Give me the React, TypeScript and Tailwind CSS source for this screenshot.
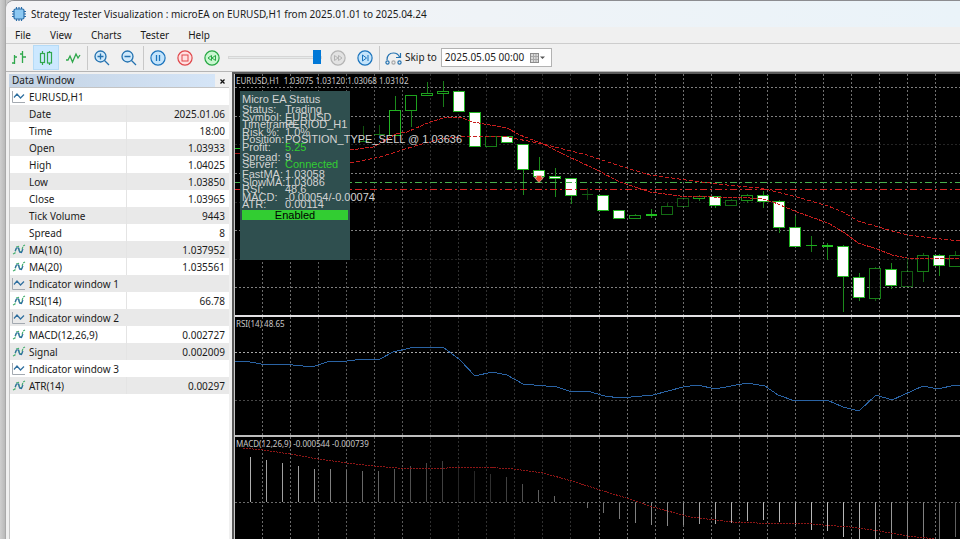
import type { ReactNode } from "react";

type Row = { label: string; value?: string; icon?: "window" | "series" };

const rows: Row[] = [
  { label: "EURUSD,H1", icon: "window" },
  { label: "Date", value: "2025.01.06" },
  { label: "Time", value: "18:00" },
  { label: "Open", value: "1.03933" },
  { label: "High", value: "1.04025" },
  { label: "Low", value: "1.03850" },
  { label: "Close", value: "1.03965" },
  { label: "Tick Volume", value: "9443" },
  { label: "Spread", value: "8" },
  { label: "MA(10)", value: "1.037952", icon: "series" },
  { label: "MA(20)", value: "1.035561", icon: "series" },
  { label: "Indicator window 1", icon: "window" },
  { label: "RSI(14)", value: "66.78", icon: "series" },
  { label: "Indicator window 2", icon: "window" },
  { label: "MACD(12,26,9)", value: "0.002727", icon: "series" },
  { label: "Signal", value: "0.002009", icon: "series" },
  { label: "Indicator window 3", icon: "window" },
  { label: "ATR(14)", value: "0.00297", icon: "series" },
];

function WindowIcon() {
  return (
    <svg width="14" height="14" viewBox="0 0 14 14" fill="none">
      <path d="M0.500 1v11.500H13" stroke="#a3a9b0" />
      <path d="M2 7.500L5 4l3.500 4L12 4.500" stroke="#2f6f9f" strokeWidth="1.200" />
    </svg>
  );
}

function SeriesIcon() {
  return (
    <svg width="14" height="14" viewBox="0 0 14 14" fill="none">
      <path d="M1 11l2-1 1.500-6 2-.5 1 5 2 .5 1.500-6 2-1" stroke="#49b071" strokeWidth="1.200" strokeDasharray="3 1" />
      <path d="M3 8l1.500-3L6.500 5l1 4 2 .500L11 6" stroke="#2c6aa3" strokeWidth="1.100" />
    </svg>
  );
}

function ToolButton({ label, active, children }: { label: string; active?: boolean; children: ReactNode }) {
  return (
    <button
      type="button"
      aria-label={label}
      className={`flex h-[25px] w-[26px] shrink-0 items-center justify-center ${active ? "bg-[#cce8ff] outline outline-1 -outline-offset-1 outline-[#b5dbf7]" : ""}`}
    >
      {children}
    </button>
  );
}

function Round({ stroke, fill, children }: { stroke: string; fill: string; children: ReactNode }) {
  return (
    <svg width="16" height="16" viewBox="0 0 16 16" fill="none" stroke={stroke}>
      <circle cx="8" cy="8" r="7.100" fill={fill} strokeWidth="1.200" />
      {children}
    </svg>
  );
}

function Separator() {
  return <span className="h-6 w-px shrink-0 bg-[#c8c8c8]" />;
}

// center x, body top, body bottom, wick top, wick bottom, kind, brightness
type Candle = [number, number, number, number, number, "w" | "h" | "d", number];

const candles: Candle[] = [
  [363, 141, 142, 126, 142, "d", 0.6],
  [379, 134, 135, 125, 136, "d", 0.6],
  [395, 110, 135, 96, 135, "h", 1],
  [411, 95, 110, 95, 127, "h", 0.9],
  [427, 93, 95, 82, 95, "h", 0.9],
  [443, 91, 93, 81, 107, "h", 0.9],
  [459, 91, 111, 91, 111, "w", 1],
  [475, 112, 146, 112, 146, "w", 1],
  [491, 136, 146, 136, 146, "h", 0.7],
  [507, 136, 142, 136, 142, "w", 1],
  [523, 144, 169, 144, 195, "w", 1],
  [539, 170, 176, 157, 176, "w", 1],
  [555, 176, 178, 168, 197, "w", 1],
  [571, 178, 195, 178, 204, "w", 1],
  [587, 194, 195, 188, 200, "d", 0.5],
  [603, 195, 210, 195, 210, "w", 1],
  [619, 210, 218, 210, 218, "w", 1],
  [635, 215, 218, 214, 218, "h", 0.8],
  [651, 214, 216, 209, 218, "d", 1],
  [667, 206, 214, 203, 214, "h", 0.6],
  [683, 198, 206, 198, 206, "h", 0.5],
  [699, 196, 198, 195, 201, "h", 0.9],
  [715, 196, 205, 196, 208, "w", 1],
  [731, 200, 205, 199, 205, "h", 0.6],
  [747, 195, 200, 194, 203, "h", 0.8],
  [763, 195, 201, 191, 208, "w", 1],
  [779, 201, 227, 200, 233, "w", 1],
  [795, 227, 246, 216, 246, "w", 1],
  [811, 245, 246, 236, 252, "d", 0.9],
  [827, 245, 247, 243, 260, "d", 1],
  [843, 246, 276, 245, 312, "w", 1],
  [859, 277, 297, 273, 301, "w", 1],
  [875, 268, 298, 267, 301, "h", 0.7],
  [891, 269, 285, 263, 289, "w", 1],
  [907, 271, 286, 258, 286, "h", 0.5],
  [923, 255, 271, 253, 282, "h", 0.7],
  [939, 255, 265, 254, 276, "w", 1],
  [955, 255, 266, 251, 266, "h", 0.7],
];

const fastMa =
  "350,150 373,147 396,134 407,132 430,122 447,117 460,117 473,122 507,128 520,135 543,144 567,156 593,168 620,182 650,192 680,196 713,197 750,198 762,199 773,202 797,212 828,223 845,233 858,243 877,249 892,255 907,258 960,259";
const slowMa =
  "350,163 380,157 418,145 440,139 470,136 507,137 543,144 587,155 620,166 650,175 693,181 727,185 760,188 773,191 797,197 828,206 843,212 858,221 892,231 908,235 932,238 960,241";
const rsi =
  "235,361 250,362 267,365 283,364 303,366 315,366 330,361 347,361 363,359 380,359 393,352 410,348 427,347 443,347 460,360 475,376 492,372 507,375 523,384 557,387 572,392 587,391 605,396 620,398 653,395 683,387 698,385 715,389 747,383 765,386 778,395 795,401 827,400 843,407 859,411 876,395 892,400 923,386 938,389 955,385 960,385";
const signal =
  "243,448 263,450 290,454 318,459 347,463 373,466 397,468 437,469 457,467 483,467 513,469 543,473 572,481 600,490 623,497 653,507 690,517 733,522 757,523 800,523 823,525 850,527 880,531 907,536 927,538 960,542";

// bar end (y) and gray level, one every 16 px
const macd: [number, string][] = [
  [457, "#b0b0b0"], [460, "#a0a0a0"], [463, "#a0a0a0"], [466, "#a0a0a0"], [469, "#909090"],
  [469, "#808080"], [470, "#707070"], [471, "#686868"], [471, "#606060"], [469, "#585858"],
  [466, "#505050"], [463, "#484848"], [461, "#404040"], [468, "#262626"], [471, "#282828"],
  [474, "#303030"], [477, "#404040"], [484, "#505050"], [490, "#606060"], [496, "#686868"],
  [502, "#606060"], [508, "#707070"], [513, "#707070"], [519, "#787878"], [523, "#808080"],
  [525, "#888888"], [526, "#888888"], [525, "#909090"], [524, "#a0a0a0"], [524, "#a8a8a8"],
  [523, "#b0b0b0"], [521, "#b0b0b0"], [520, "#b8b8b8"], [522, "#b8b8b8"], [525, "#b0b0b0"],
  [530, "#b8b8b8"], [531, "#b8b8b8"], [537, "#b8b8b8"], [542, "#b0b0b0"], [542, "#a0a0a0"],
  [542, "#989898"], [542, "#888888"], [542, "#808080"], [542, "#686868"], [537, "#606060"],
];

const verticals = Array.from({ length: 60 }, (_, i) => 262 + i * 28 + (i > 11 ? 1 : 0));

function verticalColor(x: number) {
  if (x < 300) return "#6c6c6c";
  if (x < 420) return "#5a5a5a";
  if (x < 590) return "#303030";
  return "#707070";
}

// Every pane shares one coordinate system; top is where the pane begins in it.
function Plot({ top, label, children }: { top: number; label: string; children: ReactNode }) {
  return (
    <svg role="img" aria-label={label} className="block h-full w-full" shapeRendering="crispEdges">
      <g transform={`translate(-235 ${-top})`}>
        {verticals.map((x) => (
          <line key={x} x1={x + 0.5} x2={x + 0.5} y1={top} y2={top + 1200} stroke={verticalColor(x)} strokeDasharray="2 2" />
        ))}
        {children}
      </g>
    </svg>
  );
}

function Level({ y, color, dash = "2 2" }: { y: number; color: string; dash?: string }) {
  return <line x1="235" x2="2600" y1={y + 0.5} y2={y + 0.5} stroke={color} strokeDasharray={dash} />;
}

function CandleMark({ data }: { data: Candle }) {
  const [x, top, bottom, high, low, kind, level] = data;
  return (
    <g opacity={level}>
      <line x1={x + 0.5} x2={x + 0.5} y1={high} y2={low} stroke="#1c8a1c" />
      {kind === "d" ? (
        <rect x={x - 5} y={top} width="11" height={bottom - top} fill="#22c022" />
      ) : (
        <rect
          x={x - 5.5}
          y={top + 0.5}
          width="11"
          height={Math.max(1, bottom - top)}
          fill={kind === "w" ? "#ffffff" : "#000000"}
          stroke="#22b422"
        />
      )}
    </g>
  );
}

function PaneTitle({ children }: { children: ReactNode }) {
  return (
    <div className="absolute left-px top-px whitespace-pre text-[8px] leading-3 text-[#c8c8c8]">{children}</div>
  );
}

const status: { label: string; value: string; gap: string; green?: boolean }[] = [
  { label: "Status:", value: "Trading", gap: "h-2" },
  { label: "Symbol:", value: "EURUSD", gap: "h-[7px]" },
  { label: "Timeframe:", value: "PERIOD_H1", gap: "h-2" },
  { label: "Risk %:", value: "1.0%", gap: "h-[7px]" },
  { label: "Position:", value: "POSITION_TYPE_SELL @ 1.03636", gap: "h-2" },
  { label: "Profit:", value: "5.25", gap: "h-[10px]", green: true },
  { label: "Spread:", value: "9", gap: "h-[7px]" },
  { label: "Server:", value: "Connected", gap: "h-[10px]", green: true },
  { label: "FastMA:", value: "1.03058", gap: "h-2" },
  { label: "SlowMA:", value: "1.03086", gap: "h-[7px]" },
  { label: "RSI:", value: "48.6", gap: "h-2" },
  { label: "MACD:", value: "-0.00054/-0.00074", gap: "h-[7px]" },
  { label: "ATR:", value: "0.00114", gap: "h-2" },
];

function StatusPanel() {
  return (
    <section className="absolute left-[5px] top-[17px] h-[169px] w-[110px] bg-[#2f4f4f] px-[2px] pt-[2px] font-['Liberation_Sans',Arial,sans-serif] text-[11px] leading-3 text-[#d3d3d3]">
      <h2 className="h-[10px] whitespace-nowrap">Micro EA Status</h2>
      <dl>
        {status.map((s) => (
          <div key={s.label} className={`grid grid-cols-[43px_1fr] whitespace-nowrap ${s.gap}`}>
            <dt className="w-0">{s.label}</dt>
            <dd className={`w-0 ${s.green ? "text-[#32cd32]" : ""}`}>{s.value}</dd>
          </div>
        ))}
      </dl>
      <button type="button" className="mt-1 block h-[10px] w-full bg-[#32cd32] text-center leading-[10px] text-black">
        Enabled
      </button>
    </section>
  );
}

export default function App() {
  return (
    <div className="flex h-screen overflow-hidden bg-[#c9c9c9] font-['Noto_Sans','Segoe_UI',sans-serif] text-[10px] text-[#1b1b1b]">
      <div className="w-[6px] shrink-0 border-r border-[#a9a9a9] bg-gradient-to-r from-[#cfcfcf] to-[#b9b9b9]" />
      <div className="flex min-w-0 flex-1 flex-col rounded-tl-lg border-t border-[#8c8c90] bg-[#f0f0f0]">
        <header className="flex h-[26px] shrink-0 items-center gap-[5px] rounded-tl-lg bg-gradient-to-r from-[#f4f3f5] to-[#eaf3f9] pl-[6px]">
          <svg width="14" height="14" viewBox="0 0 14 14" fill="none">
            <path d="M4.500 0v14M7 0v14M9.500 0v14M0 4.500h14M0 7h14M0 9.500h14" stroke="#2a6da8" strokeWidth="1.200" />
            <rect x="2" y="2" width="10" height="10" rx="1.500" fill="#8cc8f2" stroke="#2a6da8" strokeWidth="1.200" />
          </svg>
          <h1 className="whitespace-nowrap">
            Strategy Tester Visualization : microEA on EURUSD,H1 from 2025.01.01 to 2025.04.24
          </h1>
        </header>
        <nav className="flex h-[17px] shrink-0 items-center gap-[19px] border-b border-[#cdcdcd] pl-[9px]">
          {["File", "View", "Charts", "Tester", "Help"].map((m) => (
            <button key={m} type="button" className="leading-4">
              {m}
            </button>
          ))}
        </nav>
        <div className="flex h-[28px] shrink-0 items-center gap-px border-b border-[#b5b5b5]" role="toolbar">
          <ToolButton label="Bar chart">
            <svg width="16" height="16" viewBox="0 0 16 16" fill="none" stroke="#2fa84c" strokeWidth="1.300">
              <path d="M3.500 5v9M1 13h2.500M3.500 7H6M11.500 1v12M9 4h2.500M11.500 7H15" />
            </svg>
          </ToolButton>
          <ToolButton label="Candlesticks" active>
            <svg width="16" height="16" viewBox="0 0 16 16" fill="none" stroke="#2fa84c" strokeWidth="1.200">
              <path d="M4.500 1v2.500M4.500 12.500V15M11.500 1v1.500M11.500 13v2" />
              <rect x="2.500" y="3.500" width="4" height="9" />
              <rect x="9.500" y="2.500" width="4" height="10.500" />
            </svg>
          </ToolButton>
          <ToolButton label="Line chart">
            <svg width="16" height="16" viewBox="0 0 16 16" fill="none" stroke="#2fa84c" strokeWidth="1.300">
              <path d="M1 10h2l2-4 2.500 6L11 4l2 4 2-3" />
            </svg>
          </ToolButton>
          <Separator />
          <ToolButton label="Zoom in">
            <svg width="16" height="16" viewBox="0 0 16 16" fill="none" stroke="#2472b0" strokeWidth="1.300">
              <circle cx="6.500" cy="6.500" r="5.500" fill="#cfe9fb" />
              <path d="M10.500 10.500L15 15M3.500 6.500h6M6.500 3.500v6" />
            </svg>
          </ToolButton>
          <ToolButton label="Zoom out">
            <svg width="16" height="16" viewBox="0 0 16 16" fill="none" stroke="#2472b0" strokeWidth="1.300">
              <circle cx="6.500" cy="6.500" r="5.500" fill="#cfe9fb" />
              <path d="M10.500 10.500L15 15M3.500 6.500h6" />
            </svg>
          </ToolButton>
          <Separator />
          <ToolButton label="Pause">
            <Round stroke="#1b74bd" fill="#c4e4fb">
              <path d="M6.500 5v6M9.500 5v6" strokeWidth="1.300" />
            </Round>
          </ToolButton>
          <ToolButton label="Stop">
            <Round stroke="#e0484c" fill="#ffe0e0">
              <rect x="5" y="5" width="6" height="6" />
            </Round>
          </ToolButton>
          <ToolButton label="Slower">
            <Round stroke="#27a844" fill="#c9f7d0">
              <path d="M7.500 5.500v5L4 8zM11.500 5.500v5L8 8z" />
            </Round>
          </ToolButton>
          <input
            type="range"
            aria-label="Speed"
            defaultValue={100}
            className="mx-[2px] h-4 w-[94px] shrink-0 appearance-none bg-transparent [&::-webkit-slider-runnable-track]:h-[3px] [&::-webkit-slider-runnable-track]:border [&::-webkit-slider-runnable-track]:border-[#d6d6d6] [&::-webkit-slider-runnable-track]:bg-[#e7eaea] [&::-webkit-slider-thumb]:-mt-[7px] [&::-webkit-slider-thumb]:h-[14px] [&::-webkit-slider-thumb]:w-2 [&::-webkit-slider-thumb]:appearance-none [&::-webkit-slider-thumb]:bg-[#0078d7]"
          />
          <ToolButton label="Faster">
            <Round stroke="#b4b4b4" fill="#e2e2e2">
              <path d="M4.500 5.500v5L8 8zM8.500 5.500v5L12 8z" />
            </Round>
          </ToolButton>
          <ToolButton label="Step">
            <Round stroke="#1b74bd" fill="#c4e4fb">
              <path d="M5.500 5v6L9.500 8zM11 5v6" />
            </Round>
          </ToolButton>
          <Separator />
          <label htmlFor="skip-date" className="flex shrink-0 items-center gap-[3px] pl-[4px]">
            <svg width="17" height="14" viewBox="0 0 17 14" fill="none" stroke="#2472b0" strokeWidth="1.200">
              <path d="M2 9C2 4 5 2 8.500 2c3 0 5 1.500 6 4M15.500 2v4.500H11" />
              <circle cx="2.500" cy="11.500" r="1.600" />
              <circle cx="8.500" cy="11.500" r="1.600" stroke="#a8a8a8" />
              <circle cx="14.500" cy="11.500" r="1.600" />
            </svg>
            Skip to
          </label>
          <div className="ml-[3px] flex h-[19px] w-[111px] shrink-0 items-center border border-[#b2b2b2] bg-white pl-[3px] pr-[6px]">
            <input id="skip-date" type="text" defaultValue="2025.05.05 00:00" className="w-0 min-w-0 flex-1 outline-none" />
            <button type="button" aria-label="Open calendar">
              <svg width="15" height="10" viewBox="0 0 15 10">
                <rect x="0.500" y="0.500" width="8" height="9" fill="#dadada" stroke="#8b8b8b" />
                <path d="M3.500 1v8M6 1v8M1 3.500h7M1 6.500h7" stroke="#a8a8a8" fill="none" />
                <path d="M10 3.500h5L12.500 6z" fill="#555" />
              </svg>
            </button>
          </div>
        </div>
        <div className="flex min-h-0 flex-1">
          <aside className="flex w-[226px] shrink-0 flex-col pl-[3px] pr-[3px]">
            <div className="flex h-[15px] shrink-0 items-end justify-between">
              <h2 className="h-[13px] flex-1 bg-gradient-to-r from-[#c3d2e3] to-[#d5e5f7] pl-[3px] leading-[13px]">
                Data Window
              </h2>
              <button type="button" aria-label="Close" className="flex h-3 w-[14px] items-center justify-center">
                <svg width="5" height="5" viewBox="0 0 5 5">
                  <path d="M0.500 0.500l4 4M4.500 0.500l-4 4" stroke="#111" strokeWidth="1.300" />
                </svg>
              </button>
            </div>
            <div className="flex-1 border-l border-t border-[#c4c4c4] bg-white">
              <table className="w-full table-fixed border-separate border-spacing-0">
                <colgroup>
                  <col className="w-[117px]" />
                  <col />
                </colgroup>
                <tbody>
                  {rows.map((r) => (
                    <tr key={r.label} className="h-[17px] even:bg-[#e9e9e9]">
                      <th
                        scope="row"
                        colSpan={r.value ? 1 : 2}
                        className={`p-0 text-left font-normal leading-4 ${r.value ? "border-r border-[#e4e4e4]" : ""}`}
                      >
                        <div className="flex items-center gap-[3px] whitespace-nowrap pl-[2px]">
                          <span className="w-[14px]">
                            {r.icon === "window" && <WindowIcon />}
                            {r.icon === "series" && <SeriesIcon />}
                          </span>
                          {r.label}
                        </div>
                      </th>
                      {r.value && <td className="p-0 pr-1 text-right leading-4">{r.value}</td>}
                    </tr>
                  ))}
                </tbody>
              </table>
            </div>
          </aside>
          <main className="flex min-w-0 flex-1 flex-col border-l-2 border-t-2 border-[#5a5a5a] bg-black">
            <div className="flex min-h-0 flex-1 flex-col border-l border-[#c8c8c8]">
              <section className="relative h-[241px] shrink-0 overflow-hidden">
                <Plot top={74} label="EURUSD,H1 price">
                  {[87, 116, 173, 230, 287].map((y) => (
                    <Level key={y} y={y} color="#808080" />
                  ))}
                  {[144, 202, 259].map((y) => (
                    <Level key={y} y={y} color="#242424" />
                  ))}
                  <rect x="235" y="148" width="5" height="1" fill="#22c022" />
                  <rect x="235" y="153" width="5" height="1" fill="#a01818" />
                  {candles.map((c) => (
                    <CandleMark key={c[0]} data={c} />
                  ))}
                  <Level y={182} color="#46b04e" dash="7 3 2 3" />
                  <Level y={189} color="#d82626" dash="7 3 2 3" />
                  <polyline points={fastMa} fill="none" stroke="#c81e1e" strokeDasharray="4 1" />
                  <polyline points={slowMa} fill="none" stroke="#c81e1e" strokeDasharray="4 2" />
                  <path d="M534.500 177.500h2v-2h5v2h2L539 182.500z" fill="#e8452c" stroke="#f6d9c8" strokeWidth="0.600" shapeRendering="auto" />
                </Plot>
                <PaneTitle>{"EURUSD,H1  1.03075 1.03120 1.03068 1.03102"}</PaneTitle>
                <StatusPanel />
              </section>
              <section className="relative h-[120px] shrink-0 overflow-hidden border-t-2 border-[#e3e1e4]">
                <Plot top={317} label="RSI">
                  <Level y={352} color="#a8a8a8" />
                  <Level y={400} color="#484848" />
                  <polyline points={rsi} fill="none" stroke="#2a63a4" />
                </Plot>
                <PaneTitle>RSI(14) 48.65</PaneTitle>
              </section>
              <section className="relative min-h-0 flex-1 overflow-hidden border-t-2 border-[#bdbdbd]">
                <Plot top={437} label="MACD">
                  <Level y={502} color="#6a6a6a" />
                  {macd.map(([y, color], i) => (
                    <rect
                      key={i}
                      x={250 + i * 16 + (i > 20 ? 1 : 0)}
                      y={Math.min(y, 502)}
                      width="1"
                      height={Math.abs(502 - y)}
                      fill={color}
                    />
                  ))}
                  <polyline points={signal} fill="none" stroke="#8e1616" strokeDasharray="2 1" />
                </Plot>
                <PaneTitle>MACD(12,26,9) -0.000544 -0.000739</PaneTitle>
              </section>
            </div>
          </main>
        </div>
      </div>
    </div>
  );
}
